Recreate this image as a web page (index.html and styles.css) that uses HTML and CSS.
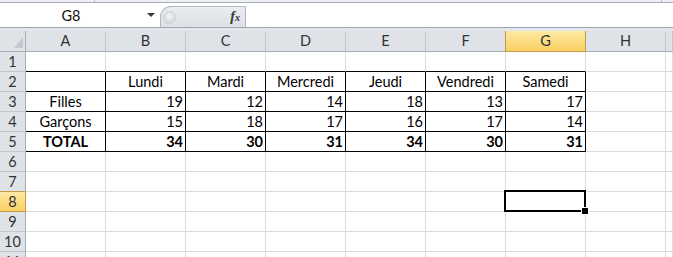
FILE: index.html
```html
<!DOCTYPE html>
<html lang="fr">

<head>
    <meta charset="UTF-8">
    <meta name="viewport" content="width=device-width, initial-scale=1.0">
    <title>Classeur - Feuil1</title>
    <link rel="stylesheet" href="styles.css">
</head>

<body>
    <div class="ribbon"><span></span><span></span><span></span></div>

    <div class="fbar">
        <div class="namebox">
            <span class="ref">G8</span>
            <span class="drop"></span>
        </div>
        <div class="fx-zone">
            <span class="knob"></span>
            <span class="fx"><i>f</i><small>x</small></span>
        </div>
        <div class="formula"></div>
    </div>
    <div class="gap"></div>

    <div class="sheet">
        <div class="row head">
            <div class="corner"><span></span></div>
            <div>A</div><div>B</div><div>C</div><div>D</div>
            <div>E</div><div>F</div><div class="sel">G</div><div>H</div><div></div>
        </div>

        <div class="row">
            <div class="rh">1</div>
            <div class="eb"></div><div class="eb"></div><div class="eb"></div><div class="eb"></div>
            <div class="eb"></div><div class="eb"></div><div class="eb"></div><div></div><div></div>
        </div>
        <div class="row">
            <div class="rh">2</div>
            <div class="box"></div>
            <div class="box mid">Lundi</div>
            <div class="box mid">Mardi</div>
            <div class="box mid">Mercredi</div>
            <div class="box mid">Jeudi</div>
            <div class="box mid">Vendredi</div>
            <div class="box mid">Samedi</div>
            <div></div><div></div>
        </div>
        <div class="row">
            <div class="rh">3</div>
            <div class="box mid">Filles</div>
            <div class="box num">19</div>
            <div class="box num">12</div>
            <div class="box num">14</div>
            <div class="box num">18</div>
            <div class="box num">13</div>
            <div class="box num">17</div>
            <div></div><div></div>
        </div>
        <div class="row">
            <div class="rh">4</div>
            <div class="box mid">Garçons</div>
            <div class="box num">15</div>
            <div class="box num">18</div>
            <div class="box num">17</div>
            <div class="box num">16</div>
            <div class="box num">17</div>
            <div class="box num">14</div>
            <div></div><div></div>
        </div>
        <div class="row">
            <div class="rh">5</div>
            <div class="box mid bold">TOTAL</div>
            <div class="box num bold">34</div>
            <div class="box num bold">30</div>
            <div class="box num bold">31</div>
            <div class="box num bold">34</div>
            <div class="box num bold">30</div>
            <div class="box num bold">31</div>
            <div></div><div></div>
        </div>
        <div class="row">
            <div class="rh">6</div>
            <div></div><div></div><div></div><div></div><div></div><div></div><div></div><div></div><div></div>
        </div>
        <div class="row">
            <div class="rh">7</div>
            <div></div><div></div><div></div><div></div><div></div><div></div><div></div><div></div><div></div>
        </div>
        <div class="row">
            <div class="rh sel">8</div>
            <div></div><div></div><div></div><div></div><div></div><div></div>
            <div class="active"><span class="handle"></span></div>
            <div></div><div></div>
        </div>
        <div class="row">
            <div class="rh">9</div>
            <div></div><div></div><div></div><div></div><div></div><div></div><div></div><div></div><div></div>
        </div>
        <div class="row">
            <div class="rh">10</div>
            <div></div><div></div><div></div><div></div><div></div><div></div><div></div><div></div><div></div>
        </div>
        <div class="row">
            <div class="rh">11</div>
            <div></div><div></div><div></div><div></div><div></div><div></div><div></div><div></div><div></div>
        </div>
    </div>
</body>

</html>
```

FILE: styles.css
```css
* {
    box-sizing: border-box;
}

body {
    margin: 0;
    width: 673px;
    height: 257px;
    overflow: hidden;
    background-color: #fff;
    font-family: Lato, 'Liberation Sans', sans-serif;
    font-size: 14.5px;
    color: #000;
}

/* bits of ribbon above the formula bar */
.ribbon {
    display: flex;
    height: 3px;
    background-color: #eceff3;
    border-bottom: 1px solid #a7adb4;
}

.ribbon span:nth-child(1) {
    width: 95px;
    border-right: 1px solid #b9bec4;
}

.ribbon span:nth-child(2) {
    width: 567px;
    border-right: 1px solid #b9bec4;
}

/* formula bar */
.fbar {
    display: flex;
    align-items: flex-end;
    height: 25px;
    background-color: #fff;
    border-bottom: 1px solid #9fa5ac;
}

.namebox {
    width: 160px;
    height: 100%;
    display: flex;
    align-items: center;
}

.namebox .ref {
    width: 142px;
    text-align: center;
    color: #111;
}

.namebox .drop {
    width: 0;
    height: 0;
    margin-left: 5px;
    border-left: 4px solid transparent;
    border-right: 4px solid transparent;
    border-top: 4px solid #3a3a3a;
}

.fx-zone {
    width: 86px;
    height: 21px;
    display: flex;
    align-items: center;
    justify-content: space-between;
    padding: 0 5px 0 2px;
    background: linear-gradient(#e9ecf0, #dde1e6);
    border: 1px solid #b3b8be;
    border-bottom: none;
    border-radius: 11px 0 0 0;
}

.knob {
    width: 13px;
    height: 13px;
    border-radius: 50%;
    background: radial-gradient(circle at 50% 40%, #f4f5f6, #c9cdd2);
    border: 1px solid #cfd3d8;
}

.fx {
    font-family: 'Liberation Serif', serif;
    font-weight: bold;
    font-size: 14px;
    color: #333;
}

.fx small {
    font-size: 10px;
    font-style: italic;
}

.formula {
    flex: 1;
    height: 100%;
    background-color: #fff;
}

.gap {
    height: 3px;
    background-color: #e3e7ec;
}

/* grid */
.row {
    display: grid;
    grid-template-columns: 26px repeat(8, 80px) 1fr;
    height: 20px;
}

.row > div {
    border-right: 1px solid #dadcdd;
    border-bottom: 1px solid #dadcdd;
    line-height: 19px;
    padding: 0 2px;
    white-space: nowrap;
    overflow: hidden;
}

.row.head {
    height: 21px;
}

.row.head > div {
    background-color: #dfe3e8;
    border-right-color: #c3c8ce;
    border-bottom-color: #a7adb4;
    text-align: center;
    line-height: 20px;
    color: #333;
}

.row.head > .corner {
    display: flex;
    justify-content: flex-end;
    align-items: flex-end;
    padding: 0 2px 3px 0;
    border-right-color: #a7adb4;
}

.corner span {
    width: 9px;
    height: 11px;
    background-color: #c4c9cf;
    clip-path: polygon(100% 0, 100% 100%, 0 100%);
}

.row > .rh {
    background-color: #dfe3e8;
    border-right-color: #a7adb4;
    border-bottom-color: #c3c8ce;
    text-align: center;
    padding: 0;
    color: #333;
}

.row > .sel,
.row.head > .sel {
    background: linear-gradient(#fde9a3, #f9d063);
    border-right-color: #c29b48;
    border-bottom-color: #c29b48;
}

.row.head > .sel {
    box-shadow: -1px 0 0 #c29b48;
}

.row > .rh.sel {
    box-shadow: 0 -1px 0 #c29b48;
}

/* bordered table A2:G5 */
.row > .eb {
    border-bottom-color: #000;
}

.row > .box {
    border-right-color: #000;
    border-bottom-color: #000;
}

.mid {
    text-align: center;
}

.num {
    text-align: right;
}

.bold {
    font-weight: bold;
}

/* active cell G8 */
.row > .active {
    position: relative;
    overflow: visible;
}

.active::before {
    content: '';
    position: absolute;
    left: -2px;
    top: -2px;
    right: -1px;
    bottom: -1px;
    border: 2px solid #000;
}

.handle {
    position: absolute;
    right: -3px;
    bottom: -3px;
    width: 6px;
    height: 6px;
    background-color: #000;
    outline: 1px solid #fff;
}
```
